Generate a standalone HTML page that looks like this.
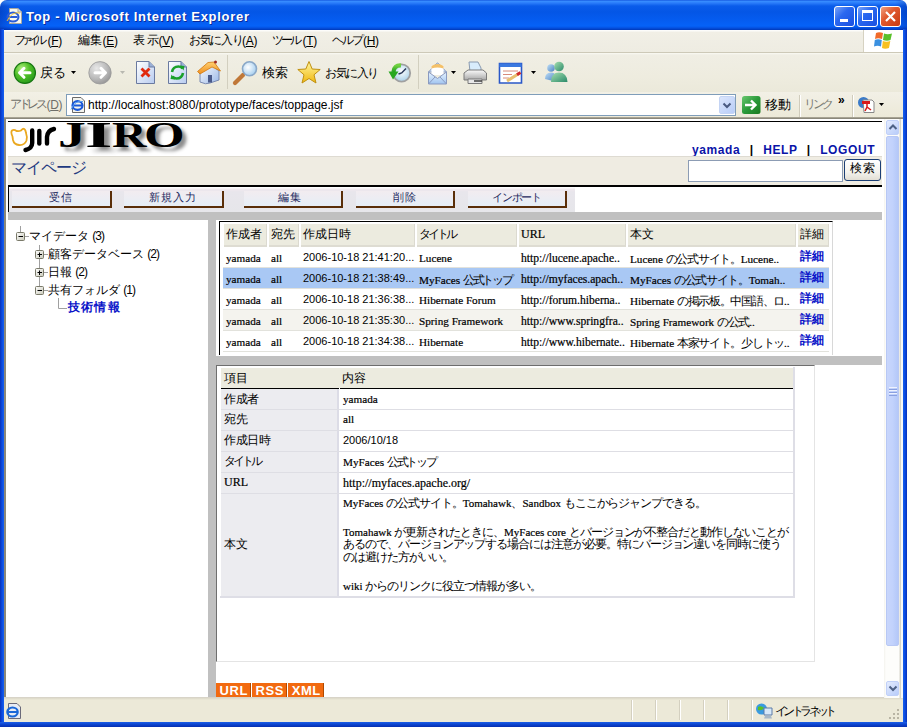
<!DOCTYPE html>
<html><head><meta charset="utf-8">
<style>
*{margin:0;padding:0;box-sizing:border-box}
html,body{width:907px;height:727px;overflow:hidden;background:#fff;font-family:"Liberation Sans",sans-serif;font-size:12px;color:#000}
.a{position:absolute}
.t{white-space:nowrap;line-height:1}
.t[style*="bold"]{-webkit-text-stroke:0}
</style></head><body>

<div class="a" style="left:0;top:0;width:907px;height:30px;border-radius:7px 7px 0 0;background:linear-gradient(#0a48d8 0,#3a90ff 1px,#2a7cfa 3px,#0a5cea 6px,#0456e6 12px,#055cf0 20px,#0562f8 26px,#0450e0 28px,#0038b8 30px)"></div>
<div class="a" style="left:0;top:0;width:907px;height:30px;border-radius:7px 7px 0 0;background:linear-gradient(90deg,rgba(0,20,120,.25),rgba(0,0,0,0) 12px,rgba(0,0,0,0) 895px,rgba(0,20,120,.25))"></div>
<div class="a t" style="left:26px;top:10px;color:#fff;font-weight:bold;font-size:13px;letter-spacing:0.7px;text-shadow:1px 1px #0a2a9a">Top - Microsoft Internet Explorer</div>
<svg class="a" style="left:6px;top:7px" width="17" height="18" viewBox="0 0 17 18">
 <path d="M3.5 1.5 H12 L15.5 5 V16.5 H3.5 Z" fill="#f8f8f0" stroke="#a8a8a0"/>
 <path d="M12 1.5 V5 H15.5" fill="#ddd" stroke="#a8a8a0"/>
 <ellipse cx="7" cy="10" rx="5.5" ry="4.5" fill="none" stroke="#2a5cd8" stroke-width="2"/>
 <path d="M2.5 10 H11.5" stroke="#2a5cd8" stroke-width="2"/>
 <path d="M1 14 Q6 4 14 6" fill="none" stroke="#f0c030" stroke-width="1"/>
</svg>
<div class="a" style="left:834px;top:6px;width:21px;height:21px;border:1px solid #fff;border-radius:3px;background:linear-gradient(135deg,#7aa4f8,#2a68f0 40%,#1a50e0)"></div>
<div class="a" style="left:840px;top:19px;width:8px;height:3px;background:#fff"></div>
<div class="a" style="left:857px;top:6px;width:21px;height:21px;border:1px solid #fff;border-radius:3px;background:linear-gradient(135deg,#7aa4f8,#2a68f0 40%,#1a50e0)"></div>
<div class="a" style="left:862px;top:10px;width:11px;height:11px;border:1px solid #fff;border-top-width:3px"></div>
<div class="a" style="left:880px;top:6px;width:21px;height:21px;border:1px solid #fff;border-radius:3px;background:linear-gradient(135deg,#f0a080,#e05a30 40%,#c83a10)"></div>
<svg class="a" style="left:880px;top:6px" width="21" height="21"><path d="M6 6 L15 15 M15 6 L6 15" stroke="#fff" stroke-width="2.2"/></svg>
<div class="a" style="left:0;top:29px;width:4px;height:698px;background:linear-gradient(90deg,#0831b8,#0a4ae0 2px,#1660f0)"></div>
<div class="a" style="left:903px;top:29px;width:4px;height:698px;background:linear-gradient(90deg,#1660f0,#0a4ae0 2px,#0831b8)"></div>
<div class="a" style="left:0;top:722px;width:907px;height:5px;background:linear-gradient(#1a5ee8,#0a3ec8 3px,#0830b0)"></div>
<div class="a" style="left:4px;top:30px;width:899px;height:23px;background:linear-gradient(#fcfcfa 0,#fcfcfa 1px,#f1efe6 2px,#eeece2);border-bottom:1px solid #cdc9b8"></div>
<div class="a" style="left:863px;top:30px;width:40px;height:22px;background:#fff;border-left:1px solid #d6d2c2"></div>
<svg class="a" style="left:873px;top:31px" width="22" height="19" viewBox="0 0 22 19">
 <path d="M3 2 Q6 0.5 10 2 L9 8 Q5 6.5 2 8 Z" fill="#f06a2a"/>
 <path d="M11 2.5 Q14.5 4 19 2.5 L17.5 9 Q14 10.5 10 9 Z" fill="#5ac02a"/>
 <path d="M1.8 9 Q5 7.5 8.8 9 L8 15.5 Q4.5 14 1 15.5 Z" fill="#3a90e0"/>
 <path d="M9.8 10 Q13.5 11.5 17.3 10 L16 17 Q12 18.5 9 17 Z" fill="#f8c020"/>
</svg>
<div class="a" style="left:4px;top:53px;width:899px;height:40px;background:linear-gradient(#fafaf4 0,#f0eee4 2px,#eeecdf 60%,#ebe9da);border-bottom:1px solid #d8d4c4"></div>
<div class="a" style="left:227px;top:55px;width:1px;height:34px;background:#d2cfbf"></div>
<div class="a" style="left:418px;top:55px;width:1px;height:34px;background:#d2cfbf"></div>
<div class="a" style="left:4px;top:92px;width:899px;height:26px;background:linear-gradient(#f2f0e6,#ece9d8);border-bottom:1px solid #a6a292"></div>
<div class="a" style="left:4px;top:118px;width:899px;height:581px;background:#fff;border-left:2px solid #8a877a;border-top:1px solid #8a877a"></div>
<div class="a t" style="left:13.5px;top:34px;font-size:12px;letter-spacing:-4.9px;-webkit-text-stroke:0">ファイル</div>
<div class="a t" style="left:47.5px;top:35px;font-size:12px;letter-spacing:-0.3px;-webkit-text-stroke:0">(<u>F</u>)</div>
<div class="a t" style="left:78.3px;top:34px;font-size:12px;letter-spacing:-0.5px;-webkit-text-stroke:0">編集</div>
<div class="a t" style="left:102.5px;top:35px;font-size:12px;letter-spacing:-0.3px;-webkit-text-stroke:0">(<u>E</u>)</div>
<div class="a t" style="left:132.5px;top:34px;font-size:12px;letter-spacing:2.5px;-webkit-text-stroke:0">表示</div>
<div class="a t" style="left:158.5px;top:35px;font-size:12px;letter-spacing:-0.3px;-webkit-text-stroke:0">(<u>V</u>)</div>
<div class="a t" style="left:188.7px;top:34px;font-size:12px;letter-spacing:-1.1px;-webkit-text-stroke:0">お気に入り</div>
<div class="a t" style="left:242px;top:35px;font-size:12px;letter-spacing:-0.3px;-webkit-text-stroke:0">(<u>A</u>)</div>
<div class="a t" style="left:272.1px;top:34px;font-size:12px;letter-spacing:-2.95px;-webkit-text-stroke:0">ツール</div>
<div class="a t" style="left:302.5px;top:35px;font-size:12px;letter-spacing:-0.3px;-webkit-text-stroke:0">(<u>T</u>)</div>
<div class="a t" style="left:332.3px;top:34px;font-size:12px;letter-spacing:-1.9px;-webkit-text-stroke:0">ヘルプ</div>
<div class="a t" style="left:363px;top:35px;font-size:12px;letter-spacing:-0.3px;-webkit-text-stroke:0">(<u>H</u>)</div>

<svg class="a" style="left:12px;top:60px" width="26" height="26" viewBox="0 0 26 26">
 <defs><radialGradient id="gb" cx="0.35" cy="0.3" r="0.8"><stop offset="0" stop-color="#b0f080"/><stop offset="0.45" stop-color="#52c028"/><stop offset="1" stop-color="#22961a"/></radialGradient>
 <radialGradient id="gf" cx="0.35" cy="0.3" r="0.8"><stop offset="0" stop-color="#e8e8e8"/><stop offset="0.6" stop-color="#b8b8b8"/><stop offset="1" stop-color="#909090"/></radialGradient></defs>
 <circle cx="12.85" cy="12.85" r="10.6" fill="url(#gb)" stroke="#157510" stroke-width="1.2"/>
 <path d="M18 12.8 H8 M12 8.3 L7.5 12.8 L12 17.3" fill="none" stroke="#fff" stroke-width="3" stroke-linecap="round" stroke-linejoin="round"/>
</svg>
<div class="a t" style="left:40px;top:66px;font-size:13px">戻る</div>
<svg class="a" style="left:71px;top:71px" width="6" height="4"><path d="M0 0 H5 L2.5 3 Z" fill="#000"/></svg>
<svg class="a" style="left:88px;top:60px" width="26" height="26" viewBox="0 0 26 26">
 <circle cx="12" cy="12.8" r="11.2" fill="url(#gf)" stroke="#999" stroke-width="0.8"/>
 <path d="M7 12.8 H17 M13 8.3 L17.5 12.8 L13 17.3" fill="none" stroke="#fff" stroke-width="3" stroke-linecap="round" stroke-linejoin="round"/>
</svg>
<svg class="a" style="left:120px;top:71px" width="6" height="4"><path d="M0 0 H5 L2.5 3 Z" fill="#b8b8b0"/></svg>
<svg class="a" style="left:135px;top:60px" width="22" height="26" viewBox="0 0 22 26">
 <defs><linearGradient id="pg" x1="0" y1="0" x2="1" y2="1"><stop offset="0" stop-color="#ffffff"/><stop offset="1" stop-color="#b8ccf0"/></linearGradient></defs>
 <path d="M1.5 1.5 H14 L19.5 7 V23.5 H1.5 Z" fill="url(#pg)" stroke="#6a7aa0"/>
 <path d="M14 1.5 V7 H19.5" fill="#9ab0d8" stroke="#6a7aa0"/>
 <path d="M6.5 8.5 L14.5 16.5 M14.5 8.5 L6.5 16.5" stroke="#e02a10" stroke-width="2.8"/>
</svg>
<svg class="a" style="left:167px;top:60px" width="22" height="26" viewBox="0 0 22 26">
 <path d="M1.5 1.5 H14 L19.5 7 V23.5 H1.5 Z" fill="url(#pg)" stroke="#6a7aa0"/>
 <path d="M14 1.5 V7 H19.5" fill="#9ab0d8" stroke="#6a7aa0"/>
 <path d="M5 12 Q6 6.5 11.5 6.5 Q14 6.5 15.5 8.5" fill="none" stroke="#1aa02a" stroke-width="2.6"/>
 <path d="M13 5.5 L17.5 6 L16.5 10.5 Z" fill="#1aa02a"/>
 <path d="M16 13 Q15 18.5 9.5 18.5 Q7 18.5 5.5 16.5" fill="none" stroke="#1aa02a" stroke-width="2.6"/>
 <path d="M8 19.5 L3.5 19 L4.5 14.5 Z" fill="#1aa02a"/>
</svg>
<svg class="a" style="left:196px;top:59px" width="26" height="27" viewBox="0 0 26 27">
 <defs><linearGradient id="hw" x1="0" y1="0" x2="1" y2="1"><stop offset="0" stop-color="#ffffff"/><stop offset="1" stop-color="#9ab8e8"/></linearGradient>
 <linearGradient id="hr" x1="0" y1="0" x2="0" y2="1"><stop offset="0" stop-color="#ffd070"/><stop offset="1" stop-color="#f09020"/></linearGradient></defs>
 <path d="M4 13 V23 Q10 26 14 24 L23 21 V12 L14 5 Z" fill="url(#hw)" stroke="#7a8ab0"/>
 <path d="M1.5 12.5 L12 3.5 L18 3 L24.5 12 L16 8 L4 15 Z" fill="url(#hr)" stroke="#d07810" stroke-width="0.8"/>
 <path d="M12 16 H16 V23.5 H12 Z" fill="#4a5a8a"/>
 <circle cx="19.5" cy="3" r="1.5" fill="#a02a20"/>
</svg>
<svg class="a" style="left:232px;top:60px" width="27" height="26" viewBox="0 0 27 26">
 <defs><radialGradient id="lens" cx="0.4" cy="0.4" r="0.6"><stop offset="0" stop-color="#ffffff"/><stop offset="1" stop-color="#a8d0f0"/></radialGradient>
 <linearGradient id="hdl" x1="0" y1="0" x2="1" y2="0"><stop offset="0" stop-color="#e0a060"/><stop offset="1" stop-color="#a86020"/></linearGradient></defs>
 <path d="M3 23 L11 15" stroke="#c07838" stroke-width="4.2" stroke-linecap="round"/>
 <circle cx="17.5" cy="8.8" r="7" fill="url(#lens)" stroke="#8aa8c8" stroke-width="1.6"/>
</svg>
<div class="a t" style="left:262px;top:67px;font-size:12.5px">検索</div>
<svg class="a" style="left:296px;top:60px" width="26" height="26" viewBox="0 0 26 26">
 <defs><linearGradient id="st" x1="0" y1="0" x2="0" y2="1"><stop offset="0" stop-color="#fff6a0"/><stop offset="1" stop-color="#f0b810"/></linearGradient></defs>
 <path d="M13 1.5 L16.2 9 L24.2 9.5 L18 14.8 L20 23 L13 18.5 L6 23 L8 14.8 L1.8 9.5 L9.8 9 Z" fill="url(#st)" stroke="#c09010" stroke-width="1" stroke-linejoin="round"/>
</svg>
<div class="a t" style="left:325px;top:67px;font-size:12px;letter-spacing:-1.5px">お気に入り</div>
<svg class="a" style="left:386px;top:61px" width="26" height="24" viewBox="0 0 26 24">
 <defs><radialGradient id="clk" cx="0.5" cy="0.4" r="0.6"><stop offset="0" stop-color="#ffffff"/><stop offset="1" stop-color="#a8d0e8"/></radialGradient>
 <linearGradient id="har" x1="0" y1="0" x2="0" y2="1"><stop offset="0" stop-color="#70d040"/><stop offset="1" stop-color="#20a020"/></linearGradient></defs>
 <circle cx="15.6" cy="12" r="8.6" fill="url(#clk)" stroke="#a0a0a0" stroke-width="1.8"/>
 <path d="M15.6 12 L20 7.5 M15.6 12 L12.5 13" stroke="#2a3a5a" stroke-width="1.5"/>
 <path d="M15 4.5 Q8 4 7.5 11" fill="none" stroke="url(#har)" stroke-width="4.2"/>
 <path d="M2.5 10.5 L12.5 10.5 L7 18.5 Z" fill="#28a820"/>
</svg>
<svg class="a" style="left:426px;top:60px" width="24" height="26" viewBox="0 0 24 26">
 <defs><linearGradient id="env" x1="0" y1="0" x2="0" y2="1"><stop offset="0" stop-color="#e8f4ff"/><stop offset="1" stop-color="#a0c4f0"/></linearGradient></defs>
 <path d="M2.5 12 L10.5 3.5 Q11.5 2.5 12.5 3.5 L20.5 12 Z" fill="#c8dcf4" stroke="#8a9ac0"/>
 <path d="M5.5 5.5 H17.5 V15 H5.5 Z" fill="#fff"/>
 <path d="M5.5 6 Q11.5 2 17.5 6 V8.5 Q11.5 6.5 5.5 8.5 Z" fill="#f4c068"/>
 <path d="M2.5 12 V24 H20.5 V12 L11.5 18.5 Z" fill="url(#env)" stroke="#8a9ac0"/>
 <path d="M2.5 24 L9 17 M20.5 24 L14 17" fill="none" stroke="#8a9ac0"/>
</svg>
<svg class="a" style="left:451px;top:71px" width="6" height="4"><path d="M0 0 H5 L2.5 3 Z" fill="#000"/></svg>
<svg class="a" style="left:462px;top:60px" width="26" height="26" viewBox="0 0 26 26">
 <defs><linearGradient id="prn" x1="0" y1="0" x2="0" y2="1"><stop offset="0" stop-color="#fafafa"/><stop offset="1" stop-color="#a8a8a8"/></linearGradient></defs>
 <path d="M7 2 H16 L19 8 V12 H8 Z" fill="#d8ecfc" stroke="#8a9ab0"/>
 <path d="M2 13 L6 10 H21 L24.5 13 V20 H2 Z" fill="url(#prn)" stroke="#7a7a7a"/>
 <path d="M6 19 H20 V23.5 H6 Z" fill="#e8e8e8" stroke="#7a7a7a"/>
 <path d="M12 21 H20" stroke="#404040" stroke-width="1.5"/>
</svg>
<svg class="a" style="left:498px;top:62px" width="26" height="23" viewBox="0 0 26 23">
 <path d="M1.5 1.5 H23.5 V21 H1.5 Z" fill="#fff" stroke="#2a58c8" stroke-width="1.6"/>
 <path d="M1.5 1.5 H23.5 V5 H1.5 Z" fill="#3a78e0"/>
 <path d="M5 9 H20 M5 12.5 H14 M5 16 H11" stroke="#d88a7a" stroke-width="1"/>
 <path d="M9 19 L21 11.5" stroke="#e8c070" stroke-width="3"/>
 <path d="M19 12.8 L22.5 10.5" stroke="#d02a2a" stroke-width="3"/>
</svg>
<svg class="a" style="left:531px;top:71px" width="6" height="4"><path d="M0 0 H5 L2.5 3 Z" fill="#000"/></svg>
<svg class="a" style="left:543px;top:60px" width="26" height="26" viewBox="0 0 26 26">
 <defs><linearGradient id="ms1" x1="0" y1="0" x2="1" y2="1"><stop offset="0" stop-color="#a8e0b0"/><stop offset="1" stop-color="#2a8a6a"/></linearGradient>
 <linearGradient id="ms2" x1="0" y1="0" x2="1" y2="1"><stop offset="0" stop-color="#c0e0f8"/><stop offset="1" stop-color="#4a80c0"/></linearGradient></defs>
 <circle cx="8" cy="8" r="3.8" fill="url(#ms2)"/>
 <path d="M2 19 Q2 12.5 8 12.5 Q12 12.5 13 16 L10 21 Z" fill="url(#ms2)"/>
 <circle cx="16" cy="6.5" r="4.8" fill="url(#ms1)"/>
 <path d="M8 22 Q8 12.5 16 12.5 Q24 12.5 24.5 22 Z" fill="url(#ms1)"/>
</svg>
<!-- address bar -->
<div class="a t" style="left:10px;top:98px;font-size:12px;color:#6e6e68;letter-spacing:-3.43px;-webkit-text-stroke:0">アドレス</div><div class="a t" style="left:46.5px;top:99px;font-size:12px;color:#6e6e68;letter-spacing:-0.3px">(<u>D</u>)</div>
<div class="a" style="left:66px;top:94px;width:670px;height:22px;background:#fff;border:1px solid #7f9db9"></div>
<svg class="a" style="left:70px;top:96px" width="17" height="18" viewBox="0 0 17 18">
 <path d="M2.5 1.5 H11 L14.5 5 V16.5 H2.5 Z" fill="#f4f4ee" stroke="#6a6a6a"/>
 <ellipse cx="7.5" cy="9.5" rx="5" ry="4.3" fill="none" stroke="#1a58d8" stroke-width="2.2"/>
 <path d="M3 9.5 H12" stroke="#1a58d8" stroke-width="2"/>
 <path d="M1 13.5 Q5 4 13 5.5" fill="none" stroke="#5aa0f0" stroke-width="1"/>
</svg>
<div class="a t" style="left:88px;top:99px;font-size:12px">http://localhost:8080/prototype/faces/toppage.jsf</div>
<div class="a" style="left:719px;top:96px;width:16px;height:18px;border-radius:2px;background:linear-gradient(135deg,#dce6fc,#b8cdf8);border:1px solid #c4d4f4"></div>
<svg class="a" style="left:719px;top:96px" width="16" height="18"><path d="M4.5 7.5 L8 11 L11.5 7.5" fill="none" stroke="#4a5a80" stroke-width="2"/></svg>
<svg class="a" style="left:741px;top:95px" width="20" height="20" viewBox="0 0 20 20">
 <defs><linearGradient id="go" x1="0" y1="0" x2="1" y2="1"><stop offset="0" stop-color="#6ac870"/><stop offset="0.5" stop-color="#2a9a3a"/><stop offset="1" stop-color="#1a7a20"/></linearGradient></defs>
 <rect x="1" y="1" width="18.5" height="18" rx="2.5" fill="url(#go)"/>
 <path d="M4 10 H14 M10 5.5 L14.5 10 L10 14.5" fill="none" stroke="#fff" stroke-width="2.4"/>
</svg>
<div class="a t" style="left:765px;top:98.5px;font-size:12.5px">移動</div>
<div class="a" style="left:799px;top:95px;width:1px;height:22px;background:#d0ccbc"></div>
<div class="a" style="left:800px;top:95px;width:1px;height:22px;background:#fff"></div>
<div class="a t" style="left:804px;top:98px;font-size:12px;color:#7a7a72;letter-spacing:-3px;-webkit-text-stroke:0">リンク</div>
<div class="a t" style="left:838px;top:94px;font-size:12px;font-weight:bold">»</div>
<div class="a" style="left:852px;top:95px;width:1px;height:22px;background:#d0ccbc"></div>
<div class="a" style="left:853px;top:95px;width:1px;height:22px;background:#fff"></div>
<svg class="a" style="left:857px;top:96px" width="18" height="18" viewBox="0 0 18 18">
 <circle cx="6.5" cy="6.5" r="5.5" fill="#3a7ac8"/>
 <path d="M6 4 H15 L17 6 V16.5 H7 Z" fill="#fff" stroke="#888"/>
 <path d="M5 5 H13 V8 H5 Z" fill="#d81a1a"/>
 <path d="M10 7 V11 L8 15 M10 11 L14 14" fill="none" stroke="#d81a1a" stroke-width="1.5"/>
</svg>
<svg class="a" style="left:879px;top:103px" width="6" height="4"><path d="M0 0 H5 L2.5 3 Z" fill="#000"/></svg>

<div class="a" style="left:8px;top:121px;width:874px;height:1px;background:#000"></div>
<svg class="a" style="left:8px;top:124px" width="52" height="30" viewBox="0 0 52 30">
 <path d="M4.5 12.5 Q2.5 8 4 6.5 Q6 5 8.5 7 Q11 7.5 13 6.5 Q15 4.5 15.3 4.6 Q17.5 5 18 9 Q19.5 13 18.5 16.5 Q16.5 21.5 11 21 Q6 20.5 5 16 Z" fill="none" stroke="#eaa820" stroke-width="1.8"/>
 <path d="M24.2 6.5 V19 Q24 24.5 17.5 26" fill="none" stroke="#000" stroke-width="4.4" stroke-linecap="round"/>
 <path d="M31.3 7 V19.5" stroke="#000" stroke-width="4.4" stroke-linecap="round"/>
 <path d="M39 19.5 V13 Q39.5 6.5 46 5" fill="none" stroke="#000" stroke-width="4.4" stroke-linecap="round"/>
</svg>
<div class="a t" style="left:58px;top:117px;font-family:'Liberation Serif',serif;font-weight:bold;font-size:36px;transform:scaleX(1.55);transform-origin:0 0;color:#000;text-shadow:3px 4px 3px rgba(0,0,0,.45)">J</div><div class="a t" style="left:85px;top:117px;font-family:'Liberation Serif',serif;font-weight:bold;font-size:36px;transform:scaleX(1.95);transform-origin:0 0;color:#000;text-shadow:3px 4px 3px rgba(0,0,0,.45)">I</div><div class="a t" style="left:112px;top:117px;font-family:'Liberation Serif',serif;font-weight:bold;font-size:36px;transform:scaleX(1.33);transform-origin:0 0;color:#000;text-shadow:3px 4px 3px rgba(0,0,0,.45)">R</div><div class="a t" style="left:144px;top:117px;font-family:'Liberation Serif',serif;font-weight:bold;font-size:36px;transform:scaleX(1.45);transform-origin:0 0;color:#000;text-shadow:3px 4px 3px rgba(0,0,0,.45)">O</div>
<div class="a t" style="left:692px;top:144px;font-weight:bold;font-size:12px;letter-spacing:0.6px;color:#0a14a8">yamada <span style="color:#000;margin:0 5.5px">|</span> HELP <span style="color:#000;margin:0 5.5px">|</span> LOGOUT</div>
<div class="a" style="left:8px;top:156px;width:874px;height:29px;background:linear-gradient(#dedbd2 0,#dedbd2 1px,#efece2 1px)"></div>
<div class="a t" style="left:11px;top:160px;font-size:16px;color:#1e3a80;letter-spacing:-1px">マイページ</div>
<div class="a" style="left:688px;top:160px;width:155px;height:22px;background:#fff;border:1px solid #8c9cb4"></div>
<div class="a t" style="left:844px;top:159px;width:37px;height:22px;border:1px solid #1c3f74;border-radius:3px;background:linear-gradient(#fff,#f4f3ee 60%,#e2ded4);font-size:12px;text-align:center;line-height:17px;padding-top:0;letter-spacing:1px;padding-left:1px">検索</div>
<div class="a" style="left:8px;top:185px;width:874px;height:2px;background:#000"></div>
<div class="a" style="left:8px;top:187px;width:567px;height:25px;background:linear-gradient(#fcfcfc 0,#fcfcfc 1px,#f0e8ee 2px,#e8e6ec 5px,#e6e6ea);border-left:1px solid #000"></div>
<div class="a" style="left:8px;top:212px;width:874px;height:8px;background:#c0c0c0"></div>
<div class="a t" style="left:12px;top:191px;width:100px;height:17px;border-right:2px solid #5a2e08;border-bottom:2px solid #5a2e08;background:linear-gradient(#f2ecf0,#e6eef6);color:#1e2a60;font-size:11px;text-align:center;line-height:12px;letter-spacing:1px;padding-right:0px">受信</div>
<div class="a t" style="left:124px;top:191px;width:100px;height:17px;border-right:2px solid #5a2e08;border-bottom:2px solid #5a2e08;background:linear-gradient(#f2ecf0,#e6eef6);color:#1e2a60;font-size:11px;text-align:center;line-height:12px;letter-spacing:1px;padding-right:0px">新規入力</div>
<div class="a t" style="left:244px;top:191px;width:99px;height:17px;border-right:2px solid #5a2e08;border-bottom:2px solid #5a2e08;background:linear-gradient(#f2ecf0,#e6eef6);color:#1e2a60;font-size:11px;text-align:center;line-height:12px;letter-spacing:1px;padding-right:5px">編集</div>
<div class="a t" style="left:356px;top:191px;width:99px;height:17px;border-right:2px solid #5a2e08;border-bottom:2px solid #5a2e08;background:linear-gradient(#f2ecf0,#e6eef6);color:#1e2a60;font-size:11px;text-align:center;line-height:12px;letter-spacing:1px;padding-right:0px">削除</div>
<div class="a t" style="left:468px;top:191px;width:99px;height:17px;border-right:2px solid #5a2e08;border-bottom:2px solid #5a2e08;background:linear-gradient(#f2ecf0,#e6eef6);color:#1e2a60;font-size:11px;text-align:center;line-height:12px;letter-spacing:-1.2px;padding-right:0px">インポート</div>

<div class="a" style="left:208px;top:220px;width:8px;height:477px;background:#c0c0c0"></div>
<svg class="a" style="left:6px;top:220px" width="200" height="100">
 <defs><linearGradient id="bx" x1="0" y1="0" x2="1" y2="1"><stop offset="0" stop-color="#fff"/><stop offset="1" stop-color="#c8c8b8"/></linearGradient></defs>
 <g stroke="#a0a0a0" stroke-width="1" fill="none">
  <path d="M14.5 6 V12"/>
  <path d="M19 16.5 H23"/>
  <path d="M33.5 25 V66"/>
  <path d="M38 34.5 H42 M38 52.5 H42 M38 70.5 H42"/>
  <path d="M52.5 78 V88.5 H61"/>
 </g>
 <g>
  <rect x="10.5" y="12.5" width="8" height="8" rx="1" fill="url(#bx)" stroke="#7a7a6a"/>
  <rect x="29.5" y="30.5" width="8" height="8" rx="1" fill="url(#bx)" stroke="#7a7a6a"/>
  <rect x="29.5" y="48.5" width="8" height="8" rx="1" fill="url(#bx)" stroke="#7a7a6a"/>
  <rect x="29.5" y="66.5" width="8" height="8" rx="1" fill="url(#bx)" stroke="#7a7a6a"/>
 </g>
 <g stroke="#000" stroke-width="1">
  <path d="M12.5 16.5 H17"/>
  <path d="M31.5 34.5 H36 M33.5 32.5 V37"/>
  <path d="M31.5 52.5 H36 M33.5 50.5 V55"/>
  <path d="M31.5 70.5 H36"/>
 </g>
</svg>
<div class="a t" style="left:29px;top:230px;font-size:12px">マイデータ <span style="letter-spacing:-1px">(3)</span></div>
<div class="a t" style="left:48px;top:248px;font-size:12px">顧客データベース <span style="letter-spacing:-1px">(2)</span></div>
<div class="a t" style="left:48px;top:266px;font-size:12px">日報 <span style="letter-spacing:-1px">(2)</span></div>
<div class="a t" style="left:48px;top:284px;font-size:12px">共有フォルダ <span style="letter-spacing:-1px">(1)</span></div>
<div class="a t" style="left:68px;top:301px;font-size:12px;font-weight:bold;color:#0a14c8;letter-spacing:1.2px">技術情報</div>
<div class="a" style="left:219px;top:221px;width:614px;height:134px;border-left:1px solid #000;border-top:1px solid #000;border-right:1px solid #d8d8d8;background:#fff"></div>
<div class="a t" style="left:224px;top:224px;width:43px;height:23px;background:#ecebdf;border-right:1px solid #dcdad0;border-bottom:2px solid #dedcd2;padding:4px 0 0 2px;">作成者</div>
<div class="a t" style="left:269px;top:224px;width:30px;height:23px;background:#ecebdf;border-right:1px solid #dcdad0;border-bottom:2px solid #dedcd2;padding:4px 0 0 2px;">宛先</div>
<div class="a t" style="left:301px;top:224px;width:114px;height:23px;background:#ecebdf;border-right:1px solid #dcdad0;border-bottom:2px solid #dedcd2;padding:4px 0 0 2px;">作成日時</div>
<div class="a t" style="left:417px;top:224px;width:100px;height:23px;background:#ecebdf;border-right:1px solid #dcdad0;border-bottom:2px solid #dedcd2;padding:4px 0 0 2px;letter-spacing:-3px;">タイトル</div>
<div class="a t" style="left:519px;top:224px;width:107px;height:23px;background:#ecebdf;border-right:1px solid #dcdad0;border-bottom:2px solid #dedcd2;padding:4px 0 0 2px;font-family:'Liberation Serif',serif;-webkit-text-stroke:0.2px currentColor;font-size:12px;">URL</div>
<div class="a t" style="left:628px;top:224px;width:168px;height:23px;background:#ecebdf;border-right:1px solid #dcdad0;border-bottom:2px solid #dedcd2;padding:4px 0 0 2px;">本文</div>
<div class="a t" style="left:798px;top:224px;width:31px;height:23px;background:#ecebdf;border-right:1px solid #dcdad0;border-bottom:2px solid #dedcd2;padding:4px 0 0 2px;">詳細</div>
<div class="a" style="left:223px;top:247px;width:606px;height:21px;background:#ffffff;border-bottom:1px solid #e2e2dc"></div>
<div class="a t" style="left:226px;top:253px;font-family:'Liberation Serif',serif;-webkit-text-stroke:0.2px currentColor;font-size:11.2px;">yamada</div>
<div class="a t" style="left:271px;top:253px;font-family:'Liberation Serif',serif;-webkit-text-stroke:0.2px currentColor;font-size:11.2px;">all</div>
<div class="a t" style="left:303px;top:252px;font-size:11px">2006-10-18 21:41:20...</div>
<div class="a t" style="left:419px;top:253px;font-family:'Liberation Serif',serif;-webkit-text-stroke:0.2px currentColor;font-size:11.2px;">Lucene</div>
<div class="a t" style="left:521px;top:253px;font-family:'Liberation Serif',serif;-webkit-text-stroke:0.2px currentColor;font-size:11.6px;">http://lucene.apache..</div>
<div class="a t" style="left:630px;top:253px;font-family:'Liberation Serif',serif;-webkit-text-stroke:0.2px currentColor;font-size:11.2px;">Lucene <span style="letter-spacing:-1.3px;font-size:12px;-webkit-text-stroke:0">の公式サイト。</span>Lucene..</div>
<div class="a t" style="left:800px;top:250px;font-size:12px;font-weight:bold;color:#0a14c8">詳細</div>
<div class="a" style="left:223px;top:268px;width:606px;height:21px;background:#a9c8f4;border-bottom:1px solid #e2e2dc"></div>
<div class="a t" style="left:226px;top:274px;font-family:'Liberation Serif',serif;-webkit-text-stroke:0.2px currentColor;font-size:11.2px;">yamada</div>
<div class="a t" style="left:271px;top:274px;font-family:'Liberation Serif',serif;-webkit-text-stroke:0.2px currentColor;font-size:11.2px;">all</div>
<div class="a t" style="left:303px;top:273px;font-size:11px">2006-10-18 21:38:49...</div>
<div class="a t" style="left:419px;top:274px;font-family:'Liberation Serif',serif;-webkit-text-stroke:0.2px currentColor;font-size:11.2px;">MyFaces <span style="letter-spacing:-2.2px;font-size:12px;-webkit-text-stroke:0">公式トップ</span></div>
<div class="a t" style="left:521px;top:274px;font-family:'Liberation Serif',serif;-webkit-text-stroke:0.2px currentColor;font-size:11.6px;">http://myfaces.apach..</div>
<div class="a t" style="left:630px;top:274px;font-family:'Liberation Serif',serif;-webkit-text-stroke:0.2px currentColor;font-size:11.2px;">MyFaces <span style="letter-spacing:-1.3px;font-size:12px;-webkit-text-stroke:0">の公式サイト。</span>Tomah..</div>
<div class="a t" style="left:800px;top:271px;font-size:12px;font-weight:bold;color:#0a14c8">詳細</div>
<div class="a" style="left:223px;top:289px;width:606px;height:21px;background:#ffffff;border-bottom:1px solid #e2e2dc"></div>
<div class="a t" style="left:226px;top:295px;font-family:'Liberation Serif',serif;-webkit-text-stroke:0.2px currentColor;font-size:11.2px;">yamada</div>
<div class="a t" style="left:271px;top:295px;font-family:'Liberation Serif',serif;-webkit-text-stroke:0.2px currentColor;font-size:11.2px;">all</div>
<div class="a t" style="left:303px;top:294px;font-size:11px">2006-10-18 21:36:38...</div>
<div class="a t" style="left:419px;top:295px;font-family:'Liberation Serif',serif;-webkit-text-stroke:0.2px currentColor;font-size:11.2px;">Hibernate Forum</div>
<div class="a t" style="left:521px;top:295px;font-family:'Liberation Serif',serif;-webkit-text-stroke:0.2px currentColor;font-size:11.6px;">http://forum.hiberna..</div>
<div class="a t" style="left:630px;top:295px;font-family:'Liberation Serif',serif;-webkit-text-stroke:0.2px currentColor;font-size:11.2px;">Hibernate <span style="letter-spacing:-1.3px;font-size:12px;-webkit-text-stroke:0">の掲示板。中国語、ロ</span>..</div>
<div class="a t" style="left:800px;top:292px;font-size:12px;font-weight:bold;color:#0a14c8">詳細</div>
<div class="a" style="left:223px;top:310px;width:606px;height:21px;background:#f4f3ee;border-bottom:1px solid #e2e2dc"></div>
<div class="a t" style="left:226px;top:316px;font-family:'Liberation Serif',serif;-webkit-text-stroke:0.2px currentColor;font-size:11.2px;">yamada</div>
<div class="a t" style="left:271px;top:316px;font-family:'Liberation Serif',serif;-webkit-text-stroke:0.2px currentColor;font-size:11.2px;">all</div>
<div class="a t" style="left:303px;top:315px;font-size:11px">2006-10-18 21:35:30...</div>
<div class="a t" style="left:419px;top:316px;font-family:'Liberation Serif',serif;-webkit-text-stroke:0.2px currentColor;font-size:11.2px;">Spring Framework</div>
<div class="a t" style="left:521px;top:316px;font-family:'Liberation Serif',serif;-webkit-text-stroke:0.2px currentColor;font-size:11.6px;">http://www.springfra..</div>
<div class="a t" style="left:630px;top:316px;font-family:'Liberation Serif',serif;-webkit-text-stroke:0.2px currentColor;font-size:11.2px;">Spring Framework <span style="letter-spacing:-1.3px;font-size:12px;-webkit-text-stroke:0">の公式</span>..</div>
<div class="a t" style="left:800px;top:313px;font-size:12px;font-weight:bold;color:#0a14c8">詳細</div>
<div class="a" style="left:223px;top:331px;width:606px;height:21px;background:#ffffff;border-bottom:1px solid #e2e2dc"></div>
<div class="a t" style="left:226px;top:337px;font-family:'Liberation Serif',serif;-webkit-text-stroke:0.2px currentColor;font-size:11.2px;">yamada</div>
<div class="a t" style="left:271px;top:337px;font-family:'Liberation Serif',serif;-webkit-text-stroke:0.2px currentColor;font-size:11.2px;">all</div>
<div class="a t" style="left:303px;top:336px;font-size:11px">2006-10-18 21:34:38...</div>
<div class="a t" style="left:419px;top:337px;font-family:'Liberation Serif',serif;-webkit-text-stroke:0.2px currentColor;font-size:11.2px;">Hibernate</div>
<div class="a t" style="left:521px;top:337px;font-family:'Liberation Serif',serif;-webkit-text-stroke:0.2px currentColor;font-size:11.6px;">http://www.hibernate..</div>
<div class="a t" style="left:630px;top:337px;font-family:'Liberation Serif',serif;-webkit-text-stroke:0.2px currentColor;font-size:11.2px;">Hibernate <span style="letter-spacing:-1.3px;font-size:12px;-webkit-text-stroke:0">本家サイト。少しトッ</span>..</div>
<div class="a t" style="left:800px;top:334px;font-size:12px;font-weight:bold;color:#0a14c8">詳細</div>

<div class="a" style="left:216px;top:356px;width:666px;height:9px;background:#c0c0c0"></div>
<div class="a" style="left:216px;top:365px;width:599px;height:297px;border-left:1px solid #6e6e6e;border-top:1px solid #6e6e6e;border-right:1px solid #e4e4e4;border-bottom:1px solid #e4e4e4;background:#fff"></div>
<div class="a" style="left:220px;top:367px;width:575px;height:231px;border-right:2px solid #dedee6;border-bottom:2px solid #dedee6"></div>
<div class="a" style="left:221px;top:368px;width:572px;height:20px;background:#ecebdf"></div>
<div class="a" style="left:221px;top:388px;width:118px;height:1px;background:#000"></div>
<div class="a" style="left:340px;top:388px;width:453px;height:1px;background:#000"></div>
<div class="a t" style="left:224px;top:372px">項目</div>
<div class="a t" style="left:342px;top:372px">内容</div>
<div class="a" style="left:221px;top:389px;width:118px;height:207px;background:#ececf0;border-right:2px solid #dcdce6"></div>
<div class="a" style="left:221px;top:409px;width:572px;height:1px;background:#dedee4"></div>
<div class="a t" style="left:224px;top:393px;font-size:12px;letter-spacing:-0.3px;">作成者</div>
<div class="a t" style="left:343px;top:394px;font-family:'Liberation Serif',serif;-webkit-text-stroke:0.2px currentColor;font-size:11.2px;">yamada</div>
<div class="a" style="left:221px;top:430px;width:572px;height:1px;background:#dedee4"></div>
<div class="a t" style="left:224px;top:413px;font-size:12px;letter-spacing:-0.3px;">宛先</div>
<div class="a t" style="left:343px;top:414px;font-family:'Liberation Serif',serif;-webkit-text-stroke:0.2px currentColor;font-size:11.2px;">all</div>
<div class="a" style="left:221px;top:451px;width:572px;height:1px;background:#dedee4"></div>
<div class="a t" style="left:224px;top:434px;font-size:12px;letter-spacing:-0.3px;">作成日時</div>
<div class="a t" style="left:343px;top:435px;font-size:11px;">2006/10/18</div>
<div class="a" style="left:221px;top:472px;width:572px;height:1px;background:#dedee4"></div>
<div class="a t" style="left:224px;top:455px;font-size:12px;letter-spacing:-3px;">タイトル</div>
<div class="a t" style="left:343px;top:456px;font-family:'Liberation Serif',serif;-webkit-text-stroke:0.2px currentColor;font-size:11.2px;">MyFaces <span style="letter-spacing:-2.2px;font-size:12px;-webkit-text-stroke:0">公式トップ</span></div>
<div class="a" style="left:221px;top:493px;width:572px;height:1px;background:#dedee4"></div>
<div class="a t" style="left:224px;top:476px;font-family:'Liberation Serif',serif;-webkit-text-stroke:0.2px currentColor;font-size:12px;">URL</div>
<div class="a t" style="left:343px;top:477px;font-family:'Liberation Serif',serif;-webkit-text-stroke:0.2px currentColor;font-size:12px;">http://myfaces.apache.org/</div>
<div class="a t" style="left:224px;top:538px;font-size:12px">本文</div>
<div class="a t" style="left:343px;top:497px;font-family:'Liberation Serif',serif;-webkit-text-stroke:0.2px currentColor;font-size:11px;">MyFaces <span style="letter-spacing:-1.05px;font-size:12px;-webkit-text-stroke:0">の公式サイト。</span>Tomahawk<span style="letter-spacing:-1.05px;font-size:12px;-webkit-text-stroke:0">、</span>Sandbox <span style="letter-spacing:-1.05px;font-size:12px;-webkit-text-stroke:0">もここからジャンプできる。</span></div>
<div class="a t" style="left:343px;top:526px;font-family:'Liberation Serif',serif;-webkit-text-stroke:0.2px currentColor;font-size:11px;">Tomahawk <span style="letter-spacing:-1.05px;font-size:12px;-webkit-text-stroke:0">が更新されたときに、</span>MyFaces core <span style="letter-spacing:-1.05px;font-size:12px;-webkit-text-stroke:0">とバージョンが不整合だと動作しないことが</span></div>
<div class="a t" style="left:343px;top:538px;font-family:'Liberation Serif',serif;-webkit-text-stroke:0.2px currentColor;font-size:11px;"><span style="letter-spacing:-1.05px;font-size:12px;-webkit-text-stroke:0">あるので、バージョンアップする場合には注意が必要。特にバージョン違いを同時に使う</span></div>
<div class="a t" style="left:343px;top:551px;font-family:'Liberation Serif',serif;-webkit-text-stroke:0.2px currentColor;font-size:11px;"><span style="letter-spacing:-1.05px;font-size:12px;-webkit-text-stroke:0">のは避けた方がいい。</span></div>
<div class="a t" style="left:343px;top:580px;font-family:'Liberation Serif',serif;-webkit-text-stroke:0.2px currentColor;font-size:11px;">wiki <span style="letter-spacing:-1.05px;font-size:12px;-webkit-text-stroke:0">からのリンクに役立つ情報が多い。</span></div>
<div class="a" style="left:216px;top:683px;width:35px;height:14px;background:#f26a10;border-right:1px solid #b04a00"></div><div class="a t" style="left:216px;top:684px;width:35px;color:#fff;font-weight:bold;font-size:13px;text-align:center;line-height:14px;letter-spacing:0.6px;padding-left:0.6px">URL</div>
<div class="a" style="left:252px;top:683px;width:35px;height:14px;background:#f26a10;border-right:1px solid #b04a00"></div><div class="a t" style="left:252px;top:684px;width:35px;color:#fff;font-weight:bold;font-size:13px;text-align:center;line-height:14px;letter-spacing:0.6px;padding-left:0.6px">RSS</div>
<div class="a" style="left:288px;top:683px;width:36px;height:14px;background:#f26a10;border-right:1px solid #b04a00"></div><div class="a t" style="left:288px;top:684px;width:36px;color:#fff;font-weight:bold;font-size:13px;text-align:center;line-height:14px;letter-spacing:0.6px;padding-left:0.6px">XML</div>

<div class="a" style="left:4px;top:697px;width:899px;height:1px;background:#d8d4c8"></div>
<div class="a" style="left:4px;top:698px;width:899px;height:24px;background:linear-gradient(#dcd8c8 0,#ece9d8 2px,#ece9d8)"></div>
<svg class="a" style="left:5px;top:702px" width="18" height="18" viewBox="0 0 18 18">
 <path d="M3.5 1.5 H12 L15.5 5 V16.5 H3.5 Z" fill="#e8ecf4" stroke="#6a6a7a"/>
 <ellipse cx="7.5" cy="10" rx="5.2" ry="4.5" fill="none" stroke="#1a68d8" stroke-width="2.2"/>
 <path d="M2.8 10 H12.2" stroke="#1a68d8" stroke-width="2"/>
</svg>
<div class="a" style="left:631px;top:700px;width:1px;height:20px;background:#d4d0c0"></div><div class="a" style="left:632px;top:700px;width:1px;height:20px;background:#fff"></div>
<div class="a" style="left:655px;top:700px;width:1px;height:20px;background:#d4d0c0"></div><div class="a" style="left:656px;top:700px;width:1px;height:20px;background:#fff"></div>
<div class="a" style="left:679px;top:700px;width:1px;height:20px;background:#d4d0c0"></div><div class="a" style="left:680px;top:700px;width:1px;height:20px;background:#fff"></div>
<div class="a" style="left:703px;top:700px;width:1px;height:20px;background:#d4d0c0"></div><div class="a" style="left:704px;top:700px;width:1px;height:20px;background:#fff"></div>
<div class="a" style="left:727px;top:700px;width:1px;height:20px;background:#d4d0c0"></div><div class="a" style="left:728px;top:700px;width:1px;height:20px;background:#fff"></div>
<div class="a" style="left:751px;top:700px;width:1px;height:20px;background:#d4d0c0"></div><div class="a" style="left:752px;top:700px;width:1px;height:20px;background:#fff"></div>

<svg class="a" style="left:755px;top:702px" width="20" height="18" viewBox="0 0 20 18">
 <circle cx="6.5" cy="7" r="5.5" fill="#3a9ae0"/>
 <path d="M3 5 Q6 3 9 6 Q7 9 3 8 Z" fill="#5ac02a"/>
 <path d="M9 6 H17 V13 H9 Z" fill="#d8e8f8" stroke="#5a7aa8"/>
 <path d="M10 14 H16 L17 16.5 H9 Z" fill="#a8b8c8"/>
</svg>
<div class="a t" style="left:775px;top:705px;font-size:12px;letter-spacing:-3.6px;-webkit-text-stroke:0">イントラネット</div>
<svg class="a" style="left:889px;top:709px" width="12" height="12"><g fill="#b8b4a4"><rect x="8" y="0" width="2" height="2"/><rect x="4" y="4" width="2" height="2"/><rect x="8" y="4" width="2" height="2"/><rect x="0" y="8" width="2" height="2"/><rect x="4" y="8" width="2" height="2"/><rect x="8" y="8" width="2" height="2"/></g></svg>
<!-- scrollbar -->
<div class="a" style="left:884px;top:119px;width:19px;height:579px;background:linear-gradient(90deg,#f4f3ee,#fdfdfb 2px,#fdfdfb 15px,#d8d6cc 16px,#d8d6cc 17px,#fafaf6 17px)"></div>
<div class="a" style="left:886px;top:120px;width:13px;height:15px;border-radius:2px;border:1px solid #c0d0f8;background:linear-gradient(135deg,#e4ecfe,#b8ccfa)"></div>
<svg class="a" style="left:884.5px;top:120px" width="16" height="15"><path d="M4.5 9 L8 5.5 L11.5 9" fill="none" stroke="#4d6185" stroke-width="2"/></svg>
<div class="a" style="left:886px;top:136px;width:13px;height:510px;border-radius:2px;border:1px solid #b8c8f4;background:linear-gradient(90deg,#c8d6fc,#c2d2fc 50%,#b4c8f8)"></div>
<div class="a" style="left:888.5px;top:387px;width:8px;height:1px;background:#eef2fe;box-shadow:0 2px #8aa0e0,0 3px #eef2fe,0 5px #8aa0e0,0 6px #eef2fe,0 8px #8aa0e0"></div>
<div class="a" style="left:886px;top:681px;width:13px;height:15px;border-radius:2px;border:1px solid #c0d0f8;background:linear-gradient(135deg,#e4ecfe,#b8ccfa)"></div>
<svg class="a" style="left:884.5px;top:681px" width="16" height="15"><path d="M4.5 5.5 L8 9 L11.5 5.5" fill="none" stroke="#4d6185" stroke-width="2"/></svg>
</body></html>
